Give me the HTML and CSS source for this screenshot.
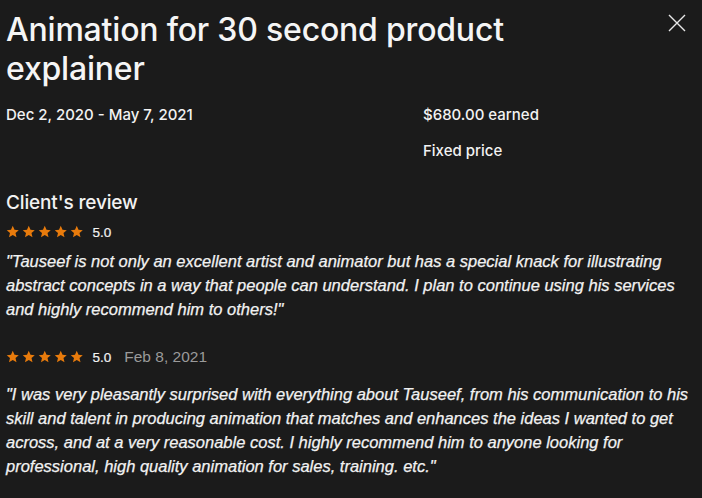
FILE: index.html
```html
<!DOCTYPE html>
<html>
<head>
<meta charset="utf-8">
<link rel="stylesheet" href="styles.css">
</head>
<body>
<div class="modal">
  <header class="head">
    <h1 class="title">Animation for 30 second product explainer</h1>
    <button class="close" aria-label="Close">
      <svg width="18" height="18" viewBox="0 0 18 18"><path d="M1 1L17 17M17 1L1 17" stroke="#e8e8e8" stroke-width="1.4" fill="none"/></svg>
    </button>
  </header>
  <div class="meta">
    <div class="meta-col">
      <div class="meta-item">Dec 2, 2020 - May 7, 2021</div>
    </div>
    <div class="meta-col">
      <div class="meta-item">$680.00 earned</div>
      <div class="meta-item">Fixed price</div>
    </div>
  </div>
  <h2 class="section">Client's review</h2>
  <div class="review">
    <div class="rating">
      <span class="stars">
        <svg viewBox="0 0 24 24"><path d="M12 1.5l3.1 7.1 7.6.7-5.8 5 1.8 7.5L12 17.8l-6.7 4 1.8-7.5-5.8-5 7.6-.7z"/></svg>
        <svg viewBox="0 0 24 24"><path d="M12 1.5l3.1 7.1 7.6.7-5.8 5 1.8 7.5L12 17.8l-6.7 4 1.8-7.5-5.8-5 7.6-.7z"/></svg>
        <svg viewBox="0 0 24 24"><path d="M12 1.5l3.1 7.1 7.6.7-5.8 5 1.8 7.5L12 17.8l-6.7 4 1.8-7.5-5.8-5 7.6-.7z"/></svg>
        <svg viewBox="0 0 24 24"><path d="M12 1.5l3.1 7.1 7.6.7-5.8 5 1.8 7.5L12 17.8l-6.7 4 1.8-7.5-5.8-5 7.6-.7z"/></svg>
        <svg viewBox="0 0 24 24"><path d="M12 1.5l3.1 7.1 7.6.7-5.8 5 1.8 7.5L12 17.8l-6.7 4 1.8-7.5-5.8-5 7.6-.7z"/></svg>
      </span>
      <span class="score">5.0</span>
    </div>
    <p class="quote">"Tauseef is not only an excellent artist and animator but has a special knack for illustrating abstract concepts in a way that people can understand. I plan to continue using his services and highly recommend him to others!"</p>
  </div>
  <div class="review second">
    <div class="rating">
      <span class="stars">
        <svg viewBox="0 0 24 24"><path d="M12 1.5l3.1 7.1 7.6.7-5.8 5 1.8 7.5L12 17.8l-6.7 4 1.8-7.5-5.8-5 7.6-.7z"/></svg>
        <svg viewBox="0 0 24 24"><path d="M12 1.5l3.1 7.1 7.6.7-5.8 5 1.8 7.5L12 17.8l-6.7 4 1.8-7.5-5.8-5 7.6-.7z"/></svg>
        <svg viewBox="0 0 24 24"><path d="M12 1.5l3.1 7.1 7.6.7-5.8 5 1.8 7.5L12 17.8l-6.7 4 1.8-7.5-5.8-5 7.6-.7z"/></svg>
        <svg viewBox="0 0 24 24"><path d="M12 1.5l3.1 7.1 7.6.7-5.8 5 1.8 7.5L12 17.8l-6.7 4 1.8-7.5-5.8-5 7.6-.7z"/></svg>
        <svg viewBox="0 0 24 24"><path d="M12 1.5l3.1 7.1 7.6.7-5.8 5 1.8 7.5L12 17.8l-6.7 4 1.8-7.5-5.8-5 7.6-.7z"/></svg>
      </span>
      <span class="score">5.0</span>
      <span class="date">Feb 8, 2021</span>
    </div>
    <p class="quote">"I was very pleasantly surprised with everything about Tauseef, from his communication to his skill and talent in producing animation that matches and enhances the ideas I wanted to get across, and at a very reasonable cost. I highly recommend him to anyone looking for professional, high quality animation for sales, training. etc."</p>
  </div>
</div>
</body>
</html>
```
FILE: styles.css
```css
html, body {
  margin: 0;
  padding: 0;
  background: #1b1b1b;
  color: #f2f2f2;
  font-family: "Liberation Sans", Arial, sans-serif;
}
.modal {
  padding: 10px 6px 0 6px;
  width: 690px;
}
.head {
  display: flex;
  justify-content: space-between;
  align-items: flex-start;
}
.title {
  margin: 0;
  font-family: Inter, "Liberation Sans", sans-serif;
  font-size: 32px;
  font-weight: 500;
  line-height: 39px;
  letter-spacing: -0.2px;
  width: 560px;
  color: #f5f5f5;
}
.close {
  background: none;
  border: 0;
  padding: 0;
  margin: 4px 10px 0 0;
  width: 18px;
  height: 18px;
}
.close svg { display: block; }
.meta {
  display: grid;
  grid-template-columns: 417px 1fr;
  margin-top: 18px;
}
.meta-item {
  font-family: Inter, "Liberation Sans", sans-serif;
  font-size: 15px;
  font-weight: 500;
  line-height: 18px;
  letter-spacing: 0;
  margin-bottom: 18px;
}
.section {
  margin: 13px 0 0 0;
  font-family: Inter, "Liberation Sans", sans-serif;
  font-size: 19px;
  font-weight: 500;
  line-height: 24px;
  letter-spacing: -0.15px;
}
.review { margin-top: 8px; }
.review.second { margin-top: 27px; }
.rating {
  display: flex;
  align-items: center;
  height: 18px;
}
.stars {
  display: flex;
  gap: 2.5px;
}
.stars svg {
  width: 13.5px;
  height: 13.5px;
  fill: #e87b0c;
  display: block;
}
.score {
  margin-left: 9px;
  font-size: 13.5px;
  color: #f2f2f2;
  -webkit-text-stroke: 0.2px #f2f2f2;
}
.date {
  margin-left: 13px;
  font-size: 15.5px;
  color: #9a9a9a;
}
.quote {
  margin: 8px 0 0 0;
  font-size: 16.5px;
  line-height: 24px;
  font-style: italic;
  color: #f2f2f2;
  -webkit-text-stroke: 0.25px #f2f2f2;
}
.review.second .quote { margin-top: 16px; }
```
